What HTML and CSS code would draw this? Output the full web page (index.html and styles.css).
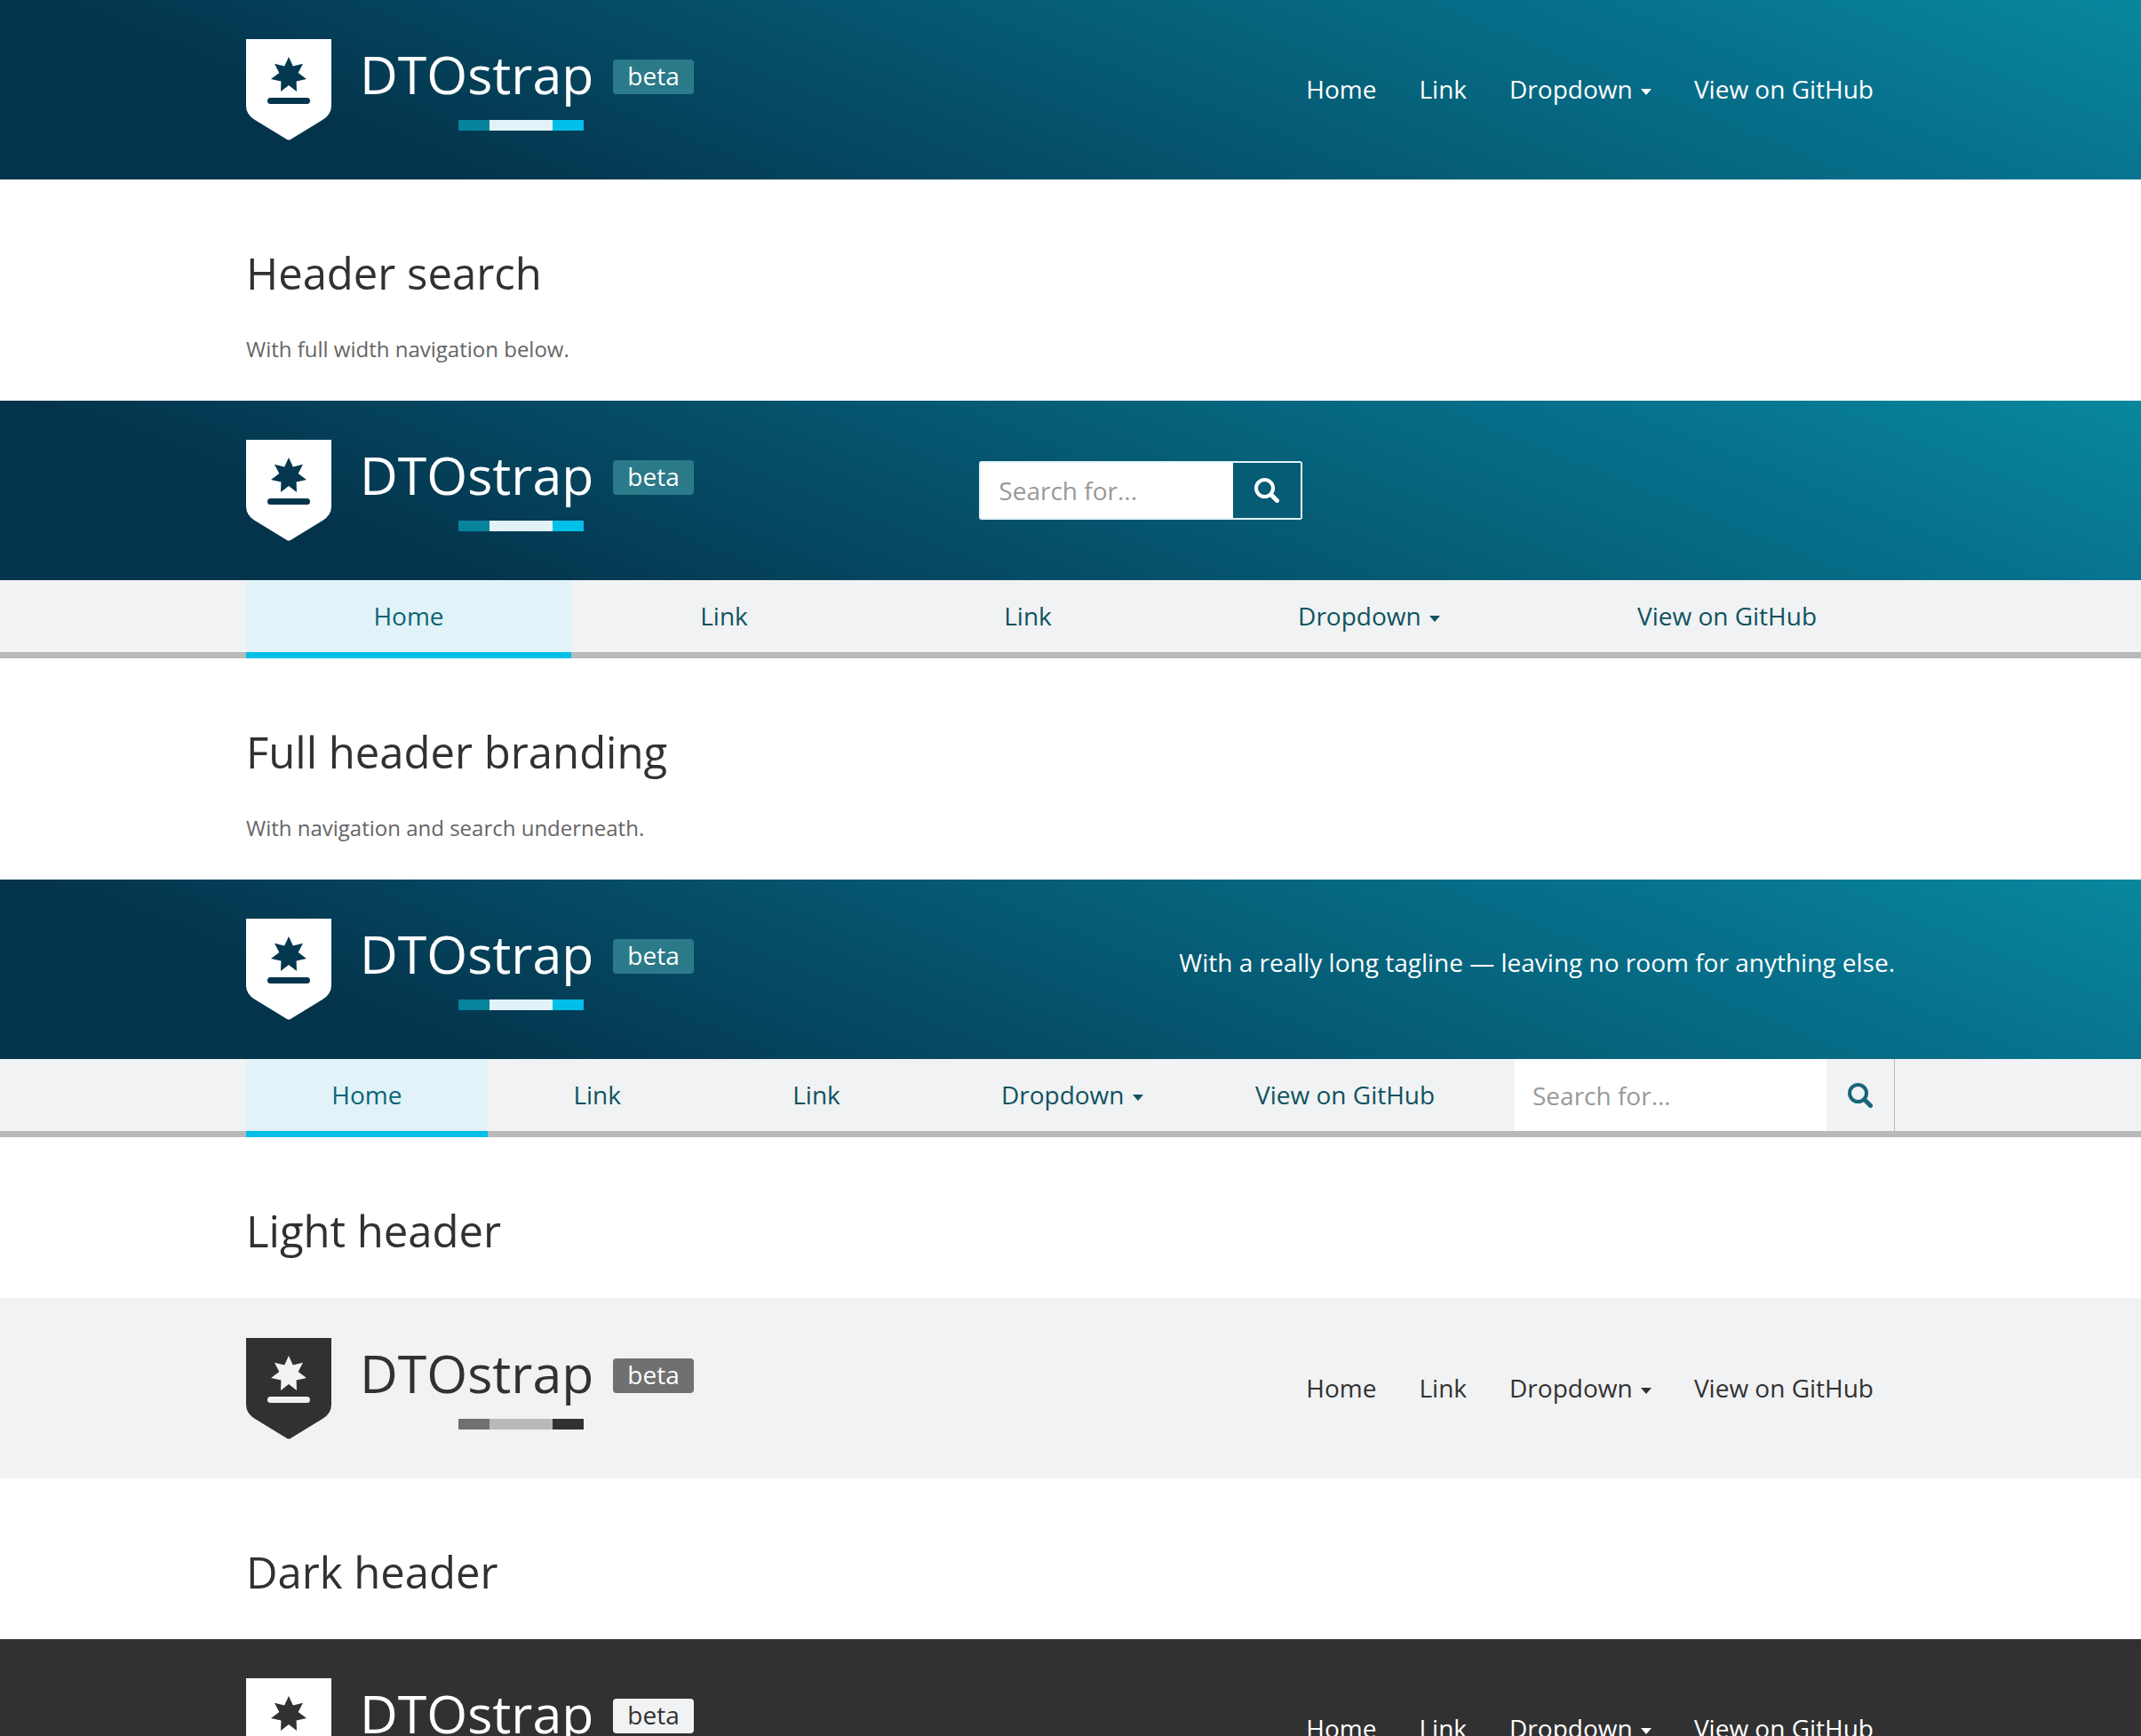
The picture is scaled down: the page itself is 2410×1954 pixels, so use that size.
FILE: index.html
```html
<!DOCTYPE html>
<html lang="en">
<head>
    <meta charset="UTF-8">
    <meta name="viewport" content="width=device-width, initial-scale=1.0">
    <title>DTOstrap - Headers</title>
    <link rel="stylesheet" href="styles.css">
</head>
<body>
    <!-- Shared icons -->
    <svg class="sprite" aria-hidden="true">
        <symbol id="shield" viewBox="0 0 96 114">
            <path fill="currentColor" fill-rule="evenodd" d="M0 0H96V75Q96 85 86 91L50 113Q48 114 46 113L10 91Q0 85 0 75Z M48 20L52.800 30.600L64 27.700L58.700 38L68 45.100L56.600 47.400L57 59L48 52L39 59L39.400 47.400L28 45.100L37.300 38L32 27.700L43.200 30.600Z M27.500 66H68.500Q72 66 72 69.500Q72 73 68.500 73H27.500Q24 73 24 69.500Q24 66 27.500 66Z"/>
        </symbol>
        <symbol id="search" viewBox="0 0 28 28">
            <circle cx="11.500" cy="11.500" r="9.500" fill="none" stroke="currentColor" stroke-width="4"/>
            <path d="M19 19L25.500 25.500" stroke="currentColor" stroke-width="5" stroke-linecap="round"/>
        </symbol>
    </svg>

    <header class="header">
        <div class="container header-row">
            <a class="brand" href="#">
                <svg class="brand-logo"><use href="#shield"/></svg>
                <span class="brand-text">
                    <span class="brand-name">DTOstrap</span>
                    <span class="stripe"></span>
                </span>
                <span class="badge">beta</span>
            </a>
            <nav class="header-nav">
                <a href="#">Home</a>
                <a href="#">Link</a>
                <button type="button">Dropdown <span class="caret"></span></button>
                <a href="#">View on GitHub</a>
            </nav>
        </div>
    </header>

    <section class="container intro">
        <h2>Header search</h2>
        <p>With full width navigation below.</p>
    </section>

    <header class="header">
        <div class="container header-grid">
            <a class="brand" href="#">
                <svg class="brand-logo"><use href="#shield"/></svg>
                <span class="brand-text">
                    <span class="brand-name">DTOstrap</span>
                    <span class="stripe"></span>
                </span>
                <span class="badge">beta</span>
            </a>
            <form class="search">
                <label class="sr-only" for="headerSearch">Search</label>
                <input type="text" id="headerSearch" placeholder="Search for...">
                <button type="button" aria-label="Search"><svg class="icon"><use href="#search"/></svg></button>
            </form>
        </div>
    </header>
    <div class="navbar">
        <nav class="container tabs">
            <a class="active" href="#">Home</a>
            <a href="#">Link</a>
            <a href="#">Link</a>
            <button type="button">Dropdown <span class="caret"></span></button>
            <a href="#">View on GitHub</a>
        </nav>
    </div>

    <section class="container intro">
        <h2>Full header branding</h2>
        <p>With navigation and search underneath.</p>
    </section>

    <header class="header">
        <div class="container header-row">
            <a class="brand" href="#">
                <svg class="brand-logo"><use href="#shield"/></svg>
                <span class="brand-text">
                    <span class="brand-name">DTOstrap</span>
                    <span class="stripe"></span>
                </span>
                <span class="badge">beta</span>
            </a>
            <div class="tagline">With a really long tagline — leaving no room for anything else.</div>
        </div>
    </header>
    <div class="navbar">
        <div class="container navbar-grid">
            <nav class="tabs">
                <a class="active" href="#">Home</a>
                <a href="#">Link</a>
                <a href="#">Link</a>
                <button type="button">Dropdown <span class="caret"></span></button>
                <a href="#">View on GitHub</a>
            </nav>
            <form class="navbar-search">
                <label class="sr-only" for="navSearch">Search</label>
                <input type="text" id="navSearch" placeholder="Search for...">
                <button type="button" aria-label="Search"><svg class="icon"><use href="#search"/></svg></button>
            </form>
        </div>
    </div>

    <section class="container intro intro-short">
        <h2>Light header</h2>
    </section>

    <header class="header header-light">
        <div class="container header-row">
            <a class="brand" href="#">
                <svg class="brand-logo"><use href="#shield"/></svg>
                <span class="brand-text">
                    <span class="brand-name">DTOstrap</span>
                    <span class="stripe"></span>
                </span>
                <span class="badge">beta</span>
            </a>
            <nav class="header-nav">
                <a href="#">Home</a>
                <a href="#">Link</a>
                <button type="button">Dropdown <span class="caret"></span></button>
                <a href="#">View on GitHub</a>
            </nav>
        </div>
    </header>

    <section class="container intro intro-short">
        <h2>Dark header</h2>
    </section>

    <header class="header header-dark">
        <div class="container header-row">
            <a class="brand" href="#">
                <svg class="brand-logo"><use href="#shield"/></svg>
                <span class="brand-text">
                    <span class="brand-name">DTOstrap</span>
                    <span class="stripe"></span>
                </span>
                <span class="badge">beta</span>
            </a>
            <nav class="header-nav">
                <a href="#">Home</a>
                <a href="#">Link</a>
                <button type="button">Dropdown <span class="caret"></span></button>
                <a href="#">View on GitHub</a>
            </nav>
        </div>
    </header>
</body>
</html>
```

FILE: styles.css
```css
* {
    box-sizing: border-box;
}
body {
    margin: 0;
    font-family: "Open Sans", "Noto Sans", sans-serif;
    font-size: 28px;
    line-height: 40px;
    color: #313131;
    background: #fff;
}
a {
    color: inherit;
    text-decoration: none;
}
button, input {
    font: inherit;
    color: inherit;
    margin: 0;
    padding: 0;
    border: none;
    border-radius: 0;
    background: none;
}
button {
    cursor: pointer;
}
.sprite {
    display: none;
}
.sr-only {
    position: absolute;
    width: 1px;
    height: 1px;
    overflow: hidden;
    clip-path: inset(50%);
}
.container {
    width: 100%;
    max-width: 1920px;
    margin: 0 auto;
    padding: 0 32px;
}

/* Headers */
.header {
    --stripe-1: #07839b;
    --stripe-2: #e1f3f8;
    --stripe-3: #00bfe9;
    padding: 44px 0;
    color: #fff;
    background: linear-gradient(22deg, #04344c 18%, #054660 35%, #06637c 63%, #07738f 81%, #08879d 100%);
}
.header-light {
    --stripe-1: #6f7070;
    --stripe-2: #b8b9b9;
    --stripe-3: #313131;
    padding-top: 45px;
    color: #313131;
    background: #f1f2f3;
}
.header-dark {
    background: #313131;
}
.header-row {
    display: flex;
    justify-content: space-between;
    align-items: flex-start;
}
.header-grid {
    display: grid;
    grid-template-columns: repeat(12, 1fr);
    column-gap: 48px;
    align-items: start;
}
.header-grid .brand {
    grid-column: span 5;
}

.brand {
    display: flex;
    align-items: flex-start;
}
.brand-logo {
    width: 96px;
    height: 114px;
    margin-right: 32px;
}
.brand-text {
    display: block;
    margin-right: 22px;
}
.brand-name {
    display: block;
    font-size: 59px;
    line-height: 78px;
}
.stripe {
    display: block;
    width: 141px;
    height: 12px;
    margin: 13px 0 0 111px;
    background: linear-gradient(to right, var(--stripe-1) 25%, var(--stripe-2) 25%, var(--stripe-2) 75%, var(--stripe-3) 75%);
}
.badge {
    margin-top: 23px;
    padding: 0 16px 2px;
    border-radius: 4px;
    line-height: 37px;
    background: #2b7a89;
}
.header-light .badge {
    color: #fff;
    background: #6f7070;
}
.header-dark .badge {
    color: #313131;
    background: #f1f2f3;
}

.header-nav {
    display: flex;
    margin-top: 36px;
}
.header-nav a, .header-nav button {
    padding: 0 24px;
}
.caret {
    display: inline-block;
    margin-left: 2px;
    vertical-align: middle;
    border-top: 7px solid;
    border-left: 6px solid transparent;
    border-right: 6px solid transparent;
}
.tagline {
    margin-top: 29px;
}

/* Search boxes */
.icon {
    display: block;
    width: 28px;
    height: 28px;
    margin: 0 auto;
}
input::placeholder {
    color: #999;
    opacity: 1;
}
.search {
    grid-column: 6 / span 3;
    display: flex;
    height: 66px;
    margin: 24px 32px 0;
    border: 2px solid #e1f3f8;
    border-radius: 3px;
}
.search input {
    flex: 1;
    min-width: 0;
    padding: 0 20px;
    color: #313131;
    background: #fff;
}
.search button {
    width: 76px;
    background: #065c75;
}

/* Navigation bars */
.navbar {
    background: linear-gradient(#f1f2f3, #f1f2f3) top / 100% 81px no-repeat #b8b9b9;
}
.tabs {
    display: grid;
    grid-template-columns: 366fr 344fr 340fr 428fr 378fr;
    color: #0f5360;
}
.tabs a, .tabs button {
    padding: 20px 0 21px;
    border-bottom: 7px solid #b8b9b9;
    text-align: center;
}
.tabs .active {
    color: #0c6577;
    background: #e1f3f8;
    border-bottom-color: #00bfe9;
}
.navbar-grid {
    display: grid;
    grid-template-columns: repeat(12, 1fr);
    column-gap: 48px;
}
.navbar-grid .tabs {
    grid-column: span 9;
    grid-template-columns: 272fr 247fr 247fr 329fr 286fr;
}
.navbar-search {
    grid-column: span 3;
    display: flex;
    margin-bottom: 7px;
    border-right: 1px solid #b8b9b9;
}
.navbar-search input {
    flex: 1;
    min-width: 0;
    padding: 0 20px;
    background: #fff;
}
.navbar-search button {
    width: 76px;
    color: #176679;
}

/* Section titles */
.intro {
    padding-top: 75px;
    padding-bottom: 40px;
}
.intro-short {
    padding-bottom: 46px;
}
.intro h2 {
    margin: 0;
    font-size: 49px;
    line-height: 60px;
    font-weight: normal;
}
.intro p {
    margin: 38px 0 0;
    font-size: 24px;
    line-height: 36px;
    color: #656565;
}
```
